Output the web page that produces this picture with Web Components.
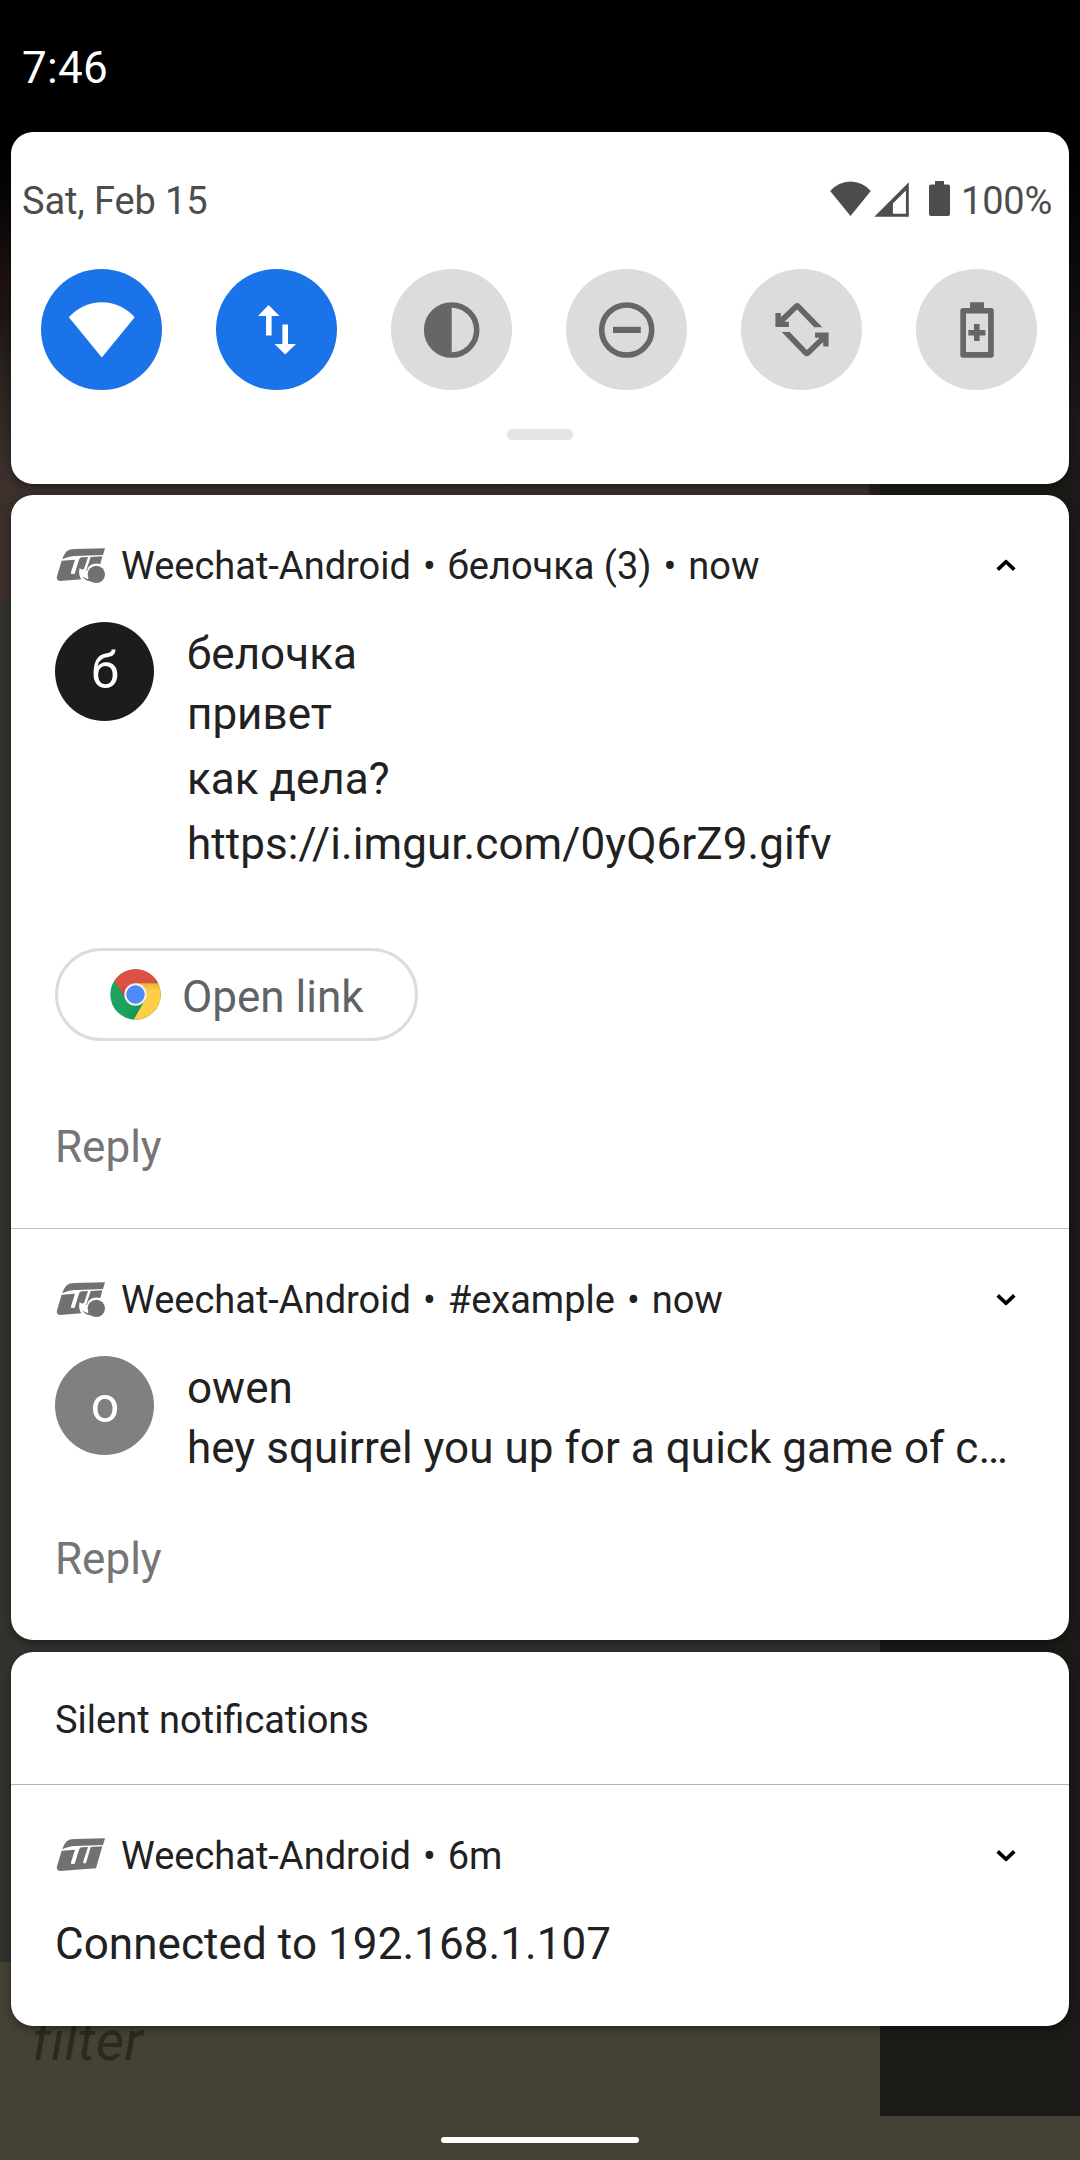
<!DOCTYPE html>
<html lang="en">
<head>
<meta charset="utf-8">
<title>Notification shade</title>
<style>
  html, body { margin: 0; padding: 0; background: #000; }
  body { width: 1080px; height: 2160px; overflow: hidden; font-family: Roboto, "Noto Sans", sans-serif; color: #212121; }
</style>
</head>
<body>
<phone-screen>
  <app-backdrop slot="backdrop">filter</app-backdrop>
  <status-bar>7:46</status-bar>
  <shade-card style="height:352px">
    <quick-header date="Sat, Feb 15" battery="100%"></quick-header>
    <quick-tiles>
      <quick-tile icon="wifi" on></quick-tile>
      <quick-tile icon="data" on></quick-tile>
      <quick-tile icon="contrast"></quick-tile>
      <quick-tile icon="dnd"></quick-tile>
      <quick-tile icon="rotate"></quick-tile>
      <quick-tile icon="saver"></quick-tile>
    </quick-tiles>
    <drag-handle></drag-handle>
  </shade-card>
  <shade-card style="height:1145px;margin-top:11px">
    <notification-item icon="weechat-msg" chevron="up">
      <span slot="meta">Weechat-Android</span><span slot="meta">белочка (3)</span><span slot="meta">now</span>
      <message-group letter="б" color="#1b1c1e">
        <span slot="sender">белочка</span>
        <span>привет</span><span>как дела?</span><span style="letter-spacing:.08px">https://i.imgur.com/0yQ6rZ9.gifv</span>
      </message-group>
      <link-chip>Open link</link-chip>
      <reply-action style="margin-top:76px">Reply</reply-action>
    </notification-item>
    <notification-item icon="weechat-msg" chevron="down" divided>
      <span slot="meta">Weechat-Android</span><span slot="meta">#example</span><span slot="meta">now</span>
      <message-group letter="o" color="#7f8082">
        <span slot="sender">owen</span>
        <span style="letter-spacing:.04px">hey squirrel you up for a quick game of c…</span>
      </message-group>
      <reply-action style="margin-top:51px">Reply</reply-action>
    </notification-item>
  </shade-card>
  <shade-card style="height:374px;margin-top:12px">
    <section-title>Silent notifications</section-title>
    <notification-item icon="weechat" chevron="down" divided="cool">
      <span slot="meta">Weechat-Android</span><span slot="meta">6m</span>
      <body-text>Connected to 192.168.1.107</body-text>
    </notification-item>
  </shade-card>
</phone-screen>

<script>
const WEECHAT_BAR = '<path d="M195 55 L189 75 L108 78 Q84 79 67 88 Q72 72 80 64 Q88 57 103 57 Z"/>';
const ICONS = {
  wifi: '<svg width="121" height="121" viewBox="0 0 121 121"><path d="M27.9 48.2A43.8 43.8 0 0 1 93.7 48.2L60.8 88.5Z"/></svg>',
  data: '<svg width="121" height="121" viewBox="0 0 121 121"><path d="M52.6 36L63.5 47H55.6V66.5H50V47H42ZM66.4 55.5H72V75H80L69.2 85.5L58.5 75H66.4Z"/></svg>',
  contrast: '<svg width="121" height="121" viewBox="0 0 121 121"><circle cx="60.7" cy="61" r="25" fill="none" stroke="currentColor" stroke-width="5.6"/><path d="M60.7 34V88A27 27 0 0 1 60.7 34Z"/></svg>',
  dnd: '<svg width="121" height="121" viewBox="0 0 121 121"><circle cx="60.7" cy="61" r="25" fill="none" stroke="currentColor" stroke-width="5.6"/><path d="M47 57.8H74.8V64H47Z"/></svg>',
  rotate: '<svg width="121" height="121" viewBox="0 0 121 121"><path d="M34.4 44H39.8V48.3L53.5 35.2Q56.2 33 58.8 35.2L81.3 58.3H73.3L56.1 40.4L43.5 52.7H47.9V58H34.4Z"/><path transform="rotate(180 61 60.7)" d="M34.4 44H39.8V48.3L53.5 35.2Q56.2 33 58.8 35.2L81.3 58.3H73.3L56.1 40.4L43.5 52.7H47.9V58H34.4Z"/></svg>',
  saver: '<svg width="121" height="121" viewBox="0 0 121 121"><path fill-rule="evenodd" d="M54 33.3H68V39H75.2Q77.8 39 77.8 41.6V86.1Q77.8 88.7 75.2 88.7H46.9Q44.3 88.7 44.3 86.1V41.6Q44.3 39 46.9 39H54ZM50 44.6V83.1H72.1V44.6Z"/><path d="M58 55H63.6V61H69.4V66.6H63.6V72H58V66.6H52.3V61H58Z"/></svg>',
  'st-wifi': '<svg width="41" height="36" viewBox="0 0 41 36"><path d="M0.2 10A26.4 26.4 0 0 1 40.8 10L20.5 35Z"/></svg>',
  'st-signal': '<svg width="35" height="36" viewBox="0 0 35 36"><path fill-rule="evenodd" d="M0.3 35.7L34.8 1.3V35.7ZM18.9 22.6V32.8H31.9V9.6Z"/></svg>',
  'st-battery': '<svg width="21" height="36" viewBox="0 0 21 36"><path d="M6 0H15V3.6H19Q21 3.6 21 5.6V33Q21 35 19 35H2Q0 35 0 33V5.6Q0 3.6 2 3.6H6Z"/></svg>',
  'chev-up': '<svg width="20" height="12" viewBox="0 0 20 12"><path d="M1.7 10.2L10 2.2L18.3 10.2" fill="none" stroke="#000" stroke-width="3.7"/></svg>',
  'chev-down': '<svg width="20" height="12" viewBox="0 0 20 12"><path d="M1.7 1.8L10 9.8L18.3 1.8" fill="none" stroke="#000" stroke-width="3.7"/></svg>',
  weechat: '<svg width="50" height="38" viewBox="45 48 150 114">' + WEECHAT_BAR +
    '<path d="M65 92L105 89L93 127Q91 133 97 132L104 131L117 89Q119 83 125 82L144 81L130 124Q128 131 134 130L138 129L152 81L187 79L168 145L60 153Q48 152 51 139Z"/></svg>',
  'weechat-msg': '<svg width="50" height="38" viewBox="45 48 150 114">' + WEECHAT_BAR +
    '<path d="M65 92L105 89L93 127Q91 133 97 132L104 131L117 89Q119 83 125 82L144 81L132 117Q124 121 119 114Q114 134 124 148L60 153Q48 152 51 139Z"/><path d="M152 81L187 79L181 102Q163 97 151 106Q143 112 142 121L138 124Z"/><circle cx="169" cy="133" r="26"/><path d="M150 122L145 147Q139 149 127 139Q134 154 156 155L170 140Z"/></svg>',
  chrome: '<svg width="51" height="51" viewBox="-25.5 -25.5 51 51"><defs><linearGradient id="r" x1="0" y1="0" x2="0.3" y2="1"><stop offset=".55" stop-color="#dd5144"/><stop offset="1" stop-color="#b7372d"/></linearGradient><linearGradient id="g" x1="0" y1="0" x2="1" y2="0.5"><stop offset=".6" stop-color="#1ca15f"/><stop offset="1" stop-color="#128244"/></linearGradient><linearGradient id="y" x1="0" y1="0" x2="0" y2="1"><stop offset="0" stop-color="#e9b53a"/><stop offset=".2" stop-color="#ffcd46"/></linearGradient></defs><circle r="25.2" fill="url(#g)"/><path fill="url(#r)" d="M-20.9 -14.1A25.2 25.2 0 0 1 22.6 -11.2H0L-9.5 5.5Z"/><path fill="url(#y)" d="M22.6 -11.2A25.2 25.2 0 0 1 -1.8 25.1L9.5 5.5L0 -11.2Z"/><circle r="11.2" fill="#f1f1f1"/><circle r="9.2" fill="#4c8bf5"/></svg>'
};

function define(name, render) {
  customElements.define(name, class extends HTMLElement {
    constructor() { super(); this.attachShadow({ mode: 'open' }); }
    connectedCallback() { this.shadowRoot.innerHTML = render(this); }
  });
}

define('glyph-icon', el => `<style>:host{display:block;flex:none}svg{display:block;fill:currentColor}</style>${ICONS[el.getAttribute('name')]}`);

define('phone-screen', () => `<style>
  :host{display:block;position:relative;width:1080px;height:2160px;overflow:hidden}
  .shade{position:absolute;inset:0;display:flex;flex-direction:column}
  </style><slot name="backdrop"></slot><div class="shade"><slot></slot></div>`);

define('app-backdrop', () => `<style>
  :host{display:flex;flex-direction:column;width:1080px;height:2160px;background:#454135}
  .main{display:flex;height:2116px}
  .left{width:880px;display:flex;flex-direction:column}
  .head{display:flex;justify-content:flex-end;height:598px;background:linear-gradient(#000 0 145px,#040606 190px,#0b0807 215px,#1b100f 270px,#211715 325px,#251f1b 350px,#3b302b 470px,#3d2f2b)}
  .edge{width:11px;background:linear-gradient(#000 0 150px,#2b211f 450px)}
  .body{height:1364px;background:#33322e}
  .input{flex:1;padding:52px 0 0 32px;font:italic 55.5px/56px Roboto,sans-serif;letter-spacing:.3px;color:#2c2a20}
  .right{flex:1;background:linear-gradient(#000 0 150px,#1b1a16 420px)}
  .nav{flex:1;display:flex;justify-content:center;padding-top:21px}
  .pill{width:198px;height:6px;border-radius:3px;background:#fff}
  </style><div class="main"><div class="left"><div class="head"><div class="edge"></div></div><div class="body"></div><div class="input"><slot></slot></div></div><div class="right"></div></div><div class="nav"><div class="pill"></div></div>`);

define('status-bar', () => `<style>:host{display:block;box-sizing:border-box;height:132px;padding:4px 0 0 22px;font-size:44px;line-height:128px;letter-spacing:.3px;color:#fff}</style><slot></slot>`);

define('shade-card', () => `<style>:host{display:block;box-sizing:border-box;flex:none;margin:0 11px;border-radius:22px;background:#fff;overflow:hidden;box-shadow:0 3px 8px rgba(0,0,0,.4)}</style><slot></slot>`);

define('quick-header', el => `<style>
  :host{display:flex;align-items:center;height:48px;padding:45px 17px 0 11px;font-size:38px;line-height:48px;color:#4d4d4d}
  .date{flex:1;letter-spacing:-.12px}.icons{display:flex;padding-bottom:4px}
  .sig{margin-left:3px}.bat{margin-left:20px}
  .pct{width:91px;margin-left:11px;letter-spacing:-.2px}
  </style><span class="date">${el.getAttribute('date')}</span><div class="icons"><glyph-icon name="st-wifi"></glyph-icon><glyph-icon class="sig" name="st-signal"></glyph-icon><glyph-icon class="bat" name="st-battery"></glyph-icon></div><span class="pct">${el.getAttribute('battery')}</span>`);

define('quick-tiles', () => `<style>:host{display:flex;gap:54px;padding:44px 0 0 30px}</style><slot></slot>`);

define('quick-tile', el => `<style>
  :host{display:block;width:121px;height:121px;border-radius:50%;background:#dcdcdc;color:#666}
  :host([on]){background:#1a73e8;color:#fff}
  </style><glyph-icon name="${el.getAttribute('icon')}"></glyph-icon>`);

define('drag-handle', () => `<style>:host{display:block;width:66px;height:11px;margin:39px auto 0;border-radius:6px;background:#e4e4e4}</style>`);

define('notification-item', el => `<style>
  :host{display:block;padding:0 44px 51px}
  :host([divided]){border-top:1px solid #bdbdbd}
  :host([divided=cool]){border-top-color:#b4b3b9}
  .top{display:flex;align-items:center;height:48px;padding:47px 9px 0 0;font-size:38px;line-height:48px}
  .logo{color:#707173;padding-bottom:2px}
  .meta{flex:1;display:flex;padding-left:16px}
  ::slotted(span[slot=meta]:not(:first-child))::before{content:"•";padding:0 12px}
  .chev{transform:translateY(-.5px)}
  </style><div class="top"><glyph-icon class="logo" name="${el.getAttribute('icon')}"></glyph-icon><div class="meta"><slot name="meta"></slot></div><glyph-icon class="chev" name="chev-${el.getAttribute('chevron')}"></glyph-icon></div><slot></slot>`);

define('message-group', el => `<style>
  :host{display:flex;align-items:flex-start;padding-top:32px;font-size:44px;line-height:60px}
  .avatar{flex:none;width:99px;height:99px;border-radius:50%;background:${el.getAttribute('color')};color:#fff;font-size:50px;line-height:99px;text-align:center;text-indent:1px}
  .lines{flex:1;display:flex;flex-direction:column;gap:5px;margin:2px 0 0 33px;white-space:nowrap}
  .lines ::slotted(span){display:block}
  .lines ::slotted(span[slot=sender]){margin-bottom:-5px}
  </style><div class="avatar">${el.getAttribute('letter')}</div><div class="lines"><slot name="sender"></slot><slot></slot></div>`);

define('link-chip', () => `<style>
  :host{display:flex;align-items:center;box-sizing:border-box;width:363px;height:93px;margin-top:74px;padding-left:51.7px;border:3px solid #dadce0;border-radius:47px;font-size:44px;color:#5f6368}
  span{margin-left:21.3px;padding-top:5px;line-height:60px;white-space:nowrap}
  </style><glyph-icon name="chrome"></glyph-icon><span><slot></slot></span>`);

define('reply-action', () => `<style>:host{display:block;font-size:44px;line-height:60px;color:#757575}</style><slot></slot>`);
define('section-title', () => `<style>:host{display:block;box-sizing:border-box;height:132px;padding:4px 0 0 44px;font-size:38px;line-height:128px;color:#202124}</style><slot></slot>`);
define('body-text', () => `<style>:host{display:block;padding-top:34px;font-size:44px;line-height:60px;letter-spacing:.07px}</style><slot></slot>`);
</script>
</body>
</html>
